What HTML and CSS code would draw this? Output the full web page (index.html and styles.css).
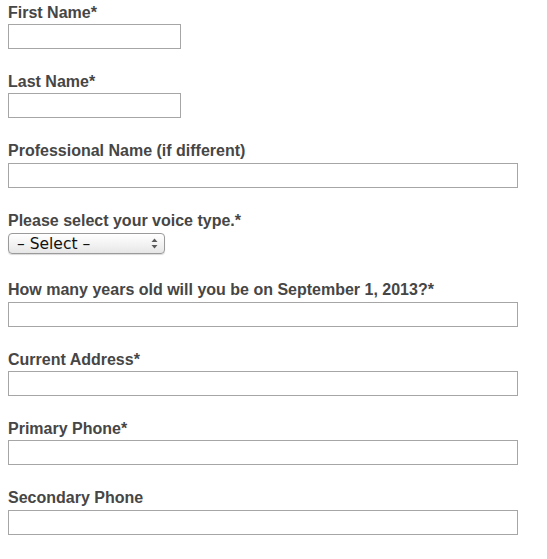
FILE: index.html
```html
<!DOCTYPE html>
<html>
<head>
<meta charset="utf-8">
<link rel="stylesheet" href="styles.css">
</head>
<body>
<form class="form">
  <div class="field">
    <label class="label">First Name*</label>
    <input class="input input-short" type="text">
  </div>
  <div class="field">
    <label class="label">Last Name*</label>
    <input class="input input-short" type="text">
  </div>
  <div class="field">
    <label class="label">Professional Name (if different)</label>
    <input class="input input-long" type="text">
  </div>
  <div class="field">
    <label class="label">Please select your voice type.*</label>
    <div class="select-row">
      <div class="select">
        <span class="select-text">– Select –</span>
        <svg class="select-arrows" width="7" height="11" viewBox="0 0 7 11">
          <path d="M3.5 0.5 L6.5 4 L0.5 4 Z" fill="#5a5a5a"/>
          <path d="M3.5 10.5 L6.5 7 L0.5 7 Z" fill="#5a5a5a"/>
        </svg>
      </div>
    </div>
  </div>
  <div class="field">
    <label class="label">How many years old will you be on September 1, 2013?*</label>
    <input class="input input-long" type="text">
  </div>
  <div class="field">
    <label class="label">Current Address*</label>
    <input class="input input-long" type="text">
  </div>
  <div class="field">
    <label class="label">Primary Phone*</label>
    <input class="input input-long" type="text">
  </div>
  <div class="field">
    <label class="label">Secondary Phone</label>
    <input class="input input-long" type="text">
  </div>
</form>
</body>
</html>
```

FILE: styles.css
```css
html, body {
  margin: 0;
  padding: 0;
  background: #ffffff;
}

.form {
  display: flex;
  flex-direction: column;
  gap: 24px;
  padding: 3.5px 8px 0 8px;
  margin: 0;
}

.field {
  display: flex;
  flex-direction: column;
  align-items: flex-start;
  gap: 2px;
}

.label {
  display: block;
  font-family: "Liberation Sans", Arial, sans-serif;
  font-weight: bold;
  font-size: 16px;
  line-height: 18.4px;
  color: #464646;
}

.input {
  box-sizing: border-box;
  height: 25px;
  margin: 0;
  padding: 2px 4px;
  border: 1px solid #a6a6a6;
  border-radius: 0;
  background: #ffffff;
  font-family: "Liberation Sans", Arial, sans-serif;
  font-size: 14px;
  outline: none;
}

.input-short {
  width: 173px;
}

.input-long {
  width: 510px;
}

.select-row {
  height: 25px;
  display: flex;
  align-items: flex-start;
}

.select {
  position: relative;
  box-sizing: border-box;
  width: 157px;
  height: 21px;
  margin-top: 1px;
  border: 1px solid #9a9a9a;
  border-radius: 4px;
  background: linear-gradient(#ffffff, #f1f1f1 60%, #e6e6e6);
  box-shadow: 0 1px 1px rgba(0, 0, 0, 0.15);
  display: flex;
  align-items: center;
  padding-left: 8px;
  padding-top: 1px;
}

.select-text {
  font-family: "DejaVu Sans", "Lucida Grande", sans-serif;
  font-size: 15.5px;
  line-height: 19px;
  color: #111111;
}

.select-arrows {
  position: absolute;
  right: 6px;
  top: 4px;
}
```
